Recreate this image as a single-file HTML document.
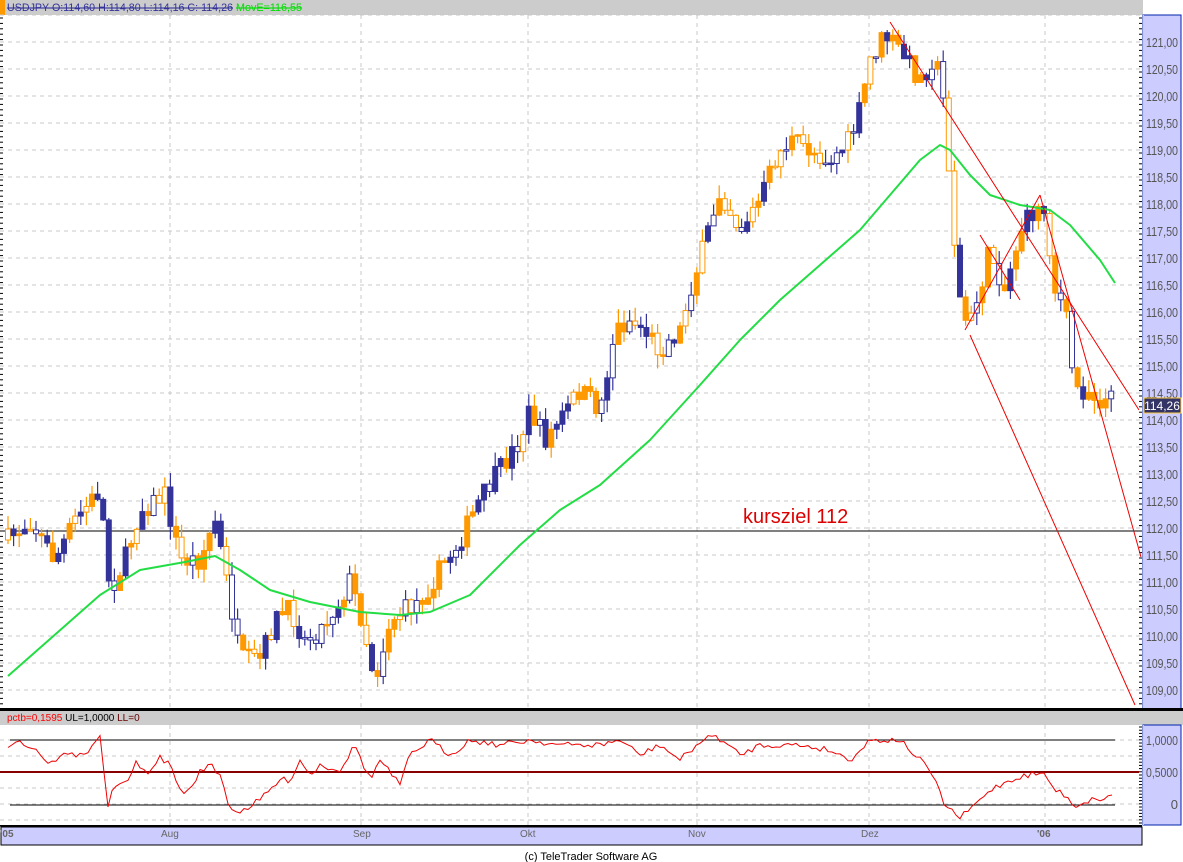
<!DOCTYPE html>
<html><head><meta charset="utf-8"><style>
html,body{margin:0;padding:0;background:#fff;width:1183px;height:862px;overflow:hidden;font-family:"Liberation Sans",sans-serif}
svg{position:absolute;left:0;top:0}
</style></head><body>
<svg id="s" width="1183" height="862" xmlns="http://www.w3.org/2000/svg" font-family="Liberation Sans, sans-serif">
<rect x="0" y="0" width="1143" height="15" fill="#cccccc"/>
<rect x="0" y="0" width="5" height="15" fill="#ff9900"/>
<text x="7" y="11" font-size="11" fill="#333399" text-decoration="line-through" textLength="226" lengthAdjust="spacingAndGlyphs">USDJPY O:114,60 H:114,80 L:114,16 C: 114,26</text>
<text x="236" y="11" font-size="11" fill="#00dd00" text-decoration="line-through" textLength="66" lengthAdjust="spacingAndGlyphs">MovE=116,55</text>
<rect x="1143" y="15" width="38" height="694" fill="#ccccff" stroke="#0022aa" stroke-width="1"/>
<line x1="1143.5" y1="15" x2="1143.5" y2="709" stroke="#ffcc44"/>
<rect x="0" y="708" width="1183" height="3" fill="#000"/>
<rect x="0" y="711" width="1183" height="14" fill="#cccccc"/>
<text x="7" y="721" font-size="10" fill="#ff0000">pctb=0,1595 <tspan fill="#000">UL=1,0000</tspan> <tspan fill="#660000">LL=0</tspan></text>
<rect x="1143" y="725" width="38" height="100" fill="#ccccff" stroke="#0022aa"/>
<line x1="1143.5" y1="725" x2="1143.5" y2="825" stroke="#ffcc44"/>
<rect x="0" y="825" width="1142" height="1.5" fill="#000"/>
<rect x="1" y="827" width="1141" height="18" fill="#ccccff" stroke="#000"/>
<g font-size="10" fill="#666" font-weight="bold">
<text x="0" y="837">'05</text><text x="161" y="837" font-weight="normal">Aug</text><text x="353" y="837" font-weight="normal">Sep</text><text x="520" y="837" font-weight="normal">Okt</text><text x="688" y="837" font-weight="normal">Nov</text><text x="861" y="837" font-weight="normal">Dez</text><text x="1037" y="837">'06</text>
</g>
<text x="591" y="860" font-size="11" fill="#000" text-anchor="middle">(c) TeleTrader Software AG</text>
<g id="g"></g>
</svg>
<script>
var g=document.getElementById('g'),NS='http://www.w3.org/2000/svg';
function el(t,a){var e=document.createElementNS(NS,t);for(var k in a)e.setAttribute(k,a[k]);g.appendChild(e);return e;}
function Y(p){return 42+(121-p)*54;}
for(var k=0;k<=24;k++){var y=Y(121-k*0.5);if(y<708)el('line',{x1:0,y1:y,x2:1140,y2:y,stroke:'#c8c8c8','stroke-dasharray':'4,4'});
var t=el('text',{x:1146,y:y+5,'font-size':13,fill:'#555',textLength:32,lengthAdjust:'spacingAndGlyphs'});t.textContent=(121-k*0.5).toFixed(2).replace('.',',');}
el('line',{x1:0,y1:15,x2:1140,y2:15,stroke:'#c8c8c8','stroke-dasharray':'4,4'});
[170,361,528,697,869,1045].forEach(function(x){el('line',{x1:x,y1:15,x2:x,y2:708,stroke:'#c8c8c8','stroke-dasharray':'4,4'});el('line',{x1:x,y1:725,x2:x,y2:826,stroke:'#c8c8c8','stroke-dasharray':'4,4'});});
[740,756,772,788,804,820].forEach(function(y){el('line',{x1:0,y1:y,x2:1140,y2:y,stroke:'#c8c8c8','stroke-dasharray':'4,4'});});
for(var y=18;y<708;y+=5.4)el('line',{x1:0,y1:y,x2:3,y2:y,stroke:'#000'});
for(var y=18;y<708;y+=5.4)el('line',{x1:1139,y1:y,x2:1142,y2:y,stroke:'#000'});
for(var y=727;y<825;y+=3.2)el('line',{x1:1139,y1:y,x2:1142,y2:y,stroke:'#000'});
[['1,0000',740,'1,0000'],['0,5000',772],['0',804]].forEach(function(a){var o={x:1178,y:a[1]+5,'font-size':13,fill:'#555','text-anchor':'end'};if(a[0].length>1){o.textLength=32;o.lengthAdjust='spacingAndGlyphs';}var t=el('text',o);t.textContent=a[0];});
el('line',{x1:0,y1:531,x2:1140,y2:531,stroke:'#000','stroke-width':1});
var kt=el('text',{x:743,y:523,'font-size':20,fill:'#dd0000'});kt.textContent='kursziel 112';
var W=[[8,540],[30,520],[55,560],[75,520],[100,490],[110,590],[125,560],[140,510],[165,495],[180,560],[200,560],[215,520],[230,600],[240,660],[260,660],[275,620],[290,610],[305,640],[320,630],[340,600],[350,580],[362,620],[375,680],[390,620],[405,610],[420,600],[440,570],[460,540],[480,500],[500,470],[520,440],[530,410],[545,440],[560,420],[580,390],[600,410],[615,330],[630,320],[645,330],[660,350],[680,330],[690,290],[700,260],[720,190],[740,230],[760,200],[775,160],[790,140],[810,150],[830,160],[850,140],[860,110],[870,60],[885,35],[900,50],[920,80],[935,55],[945,110],[955,250],[962,320],[972,320],[990,250],[1005,290],[1020,230],[1035,210],[1045,210],[1055,290],[1065,310],[1075,390],[1090,390],[1100,400],[1115,400]];
function interp(A,x){for(var i=1;i<A.length;i++)if(x<=A[i][0]){var a=A[i-1],b=A[i];return a[1]+(b[1]-a[1])*(x-a[0])/(b[0]-a[0]);}return A[A.length-1][1];}
var seed=7;function r(){seed=(seed*16807)%2147483647;return seed/2147483647;}
var prev=interp(W,8);
for(var x=8;x<=1115;x+=5.6){var c=interp(W,x)+(r()-0.5)*22,o=prev;var hi=Math.min(o,c)-r()*14,lo=Math.max(o,c)+r()*14;
var col=r()<0.55?'#ff9900':'#333399';var fill=r()<0.6?col:'#fff';
el('line',{x1:x,y1:hi,x2:x,y2:lo,stroke:col,'stroke-width':1.2});
el('rect',{x:x-2.5,y:Math.min(o,c),width:5,height:Math.max(1.5,Math.abs(c-o)),fill:fill,stroke:col,'stroke-width':1});prev=c;}
var M=[[8,676],[100,595],[140,570],[185,562],[215,556],[240,570],[270,590],[310,602],[360,612],[400,615],[430,612],[470,595],[520,545],[560,510],[600,485],[650,440],[700,385],[740,340],[780,300],[820,265],[860,230],[890,195],[920,160],[940,145],[950,150],[970,175],[990,195],[1020,205],[1050,210],[1070,225],[1100,260],[1115,283]];
var d='M'+M.map(function(p){return p.join(',')}).join(' L');
el('path',{d:d,fill:'none',stroke:'#22dd44','stroke-width':2,'stroke-linejoin':'round'});
[[890,22,1139,410],[1040,195,1141,557],[970,335,1135,705],[965,330,1040,195],[980,235,1020,300]].forEach(function(l){el('line',{x1:l[0],y1:l[1],x2:l[2],y2:l[3],stroke:'#ee0000','stroke-width':1});});
el('rect',{x:1144,y:398,width:37,height:15,fill:'#333366',stroke:'#ffcc44'});
var pt=el('text',{x:1162,y:410,'font-size':12,fill:'#fff','text-anchor':'middle'});pt.textContent='114,26';
el('line',{x1:10,y1:740,x2:1115,y2:740,stroke:'#000'});
el('line',{x1:10,y1:805,x2:1115,y2:805,stroke:'#000'});
el('line',{x1:0,y1:772,x2:1139,y2:772,stroke:'#880000','stroke-width':2});
var I=[[8,745],[17,740],[25,745],[35,748],[50,765],[60,755],[85,755],[95,740],[100,738],[108,805],[115,785],[130,783],[135,760],[150,775],[160,757],[170,765],[180,790],[190,792],[200,770],[210,765],[220,775],[230,808],[240,812],[260,800],[270,790],[280,780],[290,780],[300,760],[310,775],[320,765],[340,770],[355,745],[370,780],[380,760],[400,785],[410,755],[430,740],[450,755],[470,740],[500,745],[530,740],[560,745],[600,745],[620,740],[640,755],[660,745],[680,760],[700,742],[715,735],[740,755],[760,745],[800,745],[830,750],[850,760],[870,740],[900,740],[910,750],[930,770],[945,805],[960,818],[975,805],[990,790],[1010,780],[1035,773],[1045,775],[1055,790],[1065,795],[1075,806],[1090,800],[1105,798],[1115,795]];
var pts=[];for(var x=8;x<=1115;x+=4){pts.push(x+','+(interp(I,x)+(r()-0.5)*6).toFixed(1));}
el('polyline',{points:pts.join(' '),fill:'none',stroke:'#ee0000','stroke-width':1});
</script>
</body></html>
